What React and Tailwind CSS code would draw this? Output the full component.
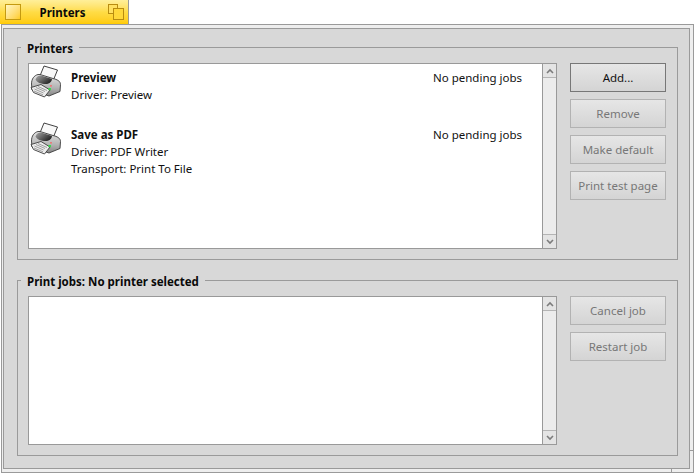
import React from "react";

function PrinterIcon() {
  return (
    <svg width="32" height="33" viewBox="0 0 32 33" className="shrink-0">
      <defs>
        <linearGradient id="body" x1="0" y1="0" x2="0" y2="1">
          <stop offset="0" stopColor="#e4e4e4" />
          <stop offset="0.6" stopColor="#b4b4b4" />
          <stop offset="1" stopColor="#858585" />
        </linearGradient>
        <linearGradient id="well" x1="0" y1="0" x2="1" y2="0.6">
          <stop offset="0" stopColor="#a8a8a8" />
          <stop offset="1" stopColor="#262626" />
        </linearGradient>
      </defs>
      <path d="M9.5 12 L14 1 L27.5 5 L23 16 Z" fill="#f8f8f8" stroke="#2e2e2e" strokeWidth="0.9" />
      <path d="M1.5 19 C1.5 14 4 10.5 8 9.5 L10 9.5 L23 13.5 C27 14.5 30.5 16 30.5 19.5 L30 26.5 L19 31 L2 25 Z" fill="url(#body)" stroke="#3a3a3a" strokeWidth="0.9" />
      <path d="M5.5 14.5 C6.5 11.5 9 10 11 10.5 L22 14 C21.5 17.5 19 19 15.5 19 C11 19 7 17.5 5.5 14.5 Z" fill="url(#well)" />
      <path d="M1 22.5 L11 19.5 L20 25 L14.5 32 L3.5 27.5 Z" fill="#ececec" stroke="#3a3a3a" strokeWidth="0.9" />
      <path d="M6 22.5 L15 26.5 M8 21.5 L17 25.5 M4.5 24 L13.5 28 M4 26 L13 29.8" stroke="#8c8c8c" strokeWidth="0.8" />
      <rect x="20" y="20" width="2" height="1.6" fill="#e97a7a" />
      <rect x="18.5" y="23" width="2.4" height="2.2" fill="#35dc48" />
    </svg>
  );
}

function ScrollBar() {
  return (
    <div className="w-[14px] shrink-0 flex flex-col border-l border-[#999999] bg-[#ececec]">
      <div className="h-[14px] flex items-center justify-center border-b border-[#b4b4b4] bg-[#e4e4e4]">
        <svg width="8" height="6" viewBox="0 0 8 6"><path d="M1 5 L4 2 L7 5" fill="none" stroke="#7c7c7c" strokeWidth="1.6" /></svg>
      </div>
      <div className="flex-1" />
      <div className="h-[14px] flex items-center justify-center border-t border-[#b4b4b4] bg-[#e4e4e4]">
        <svg width="8" height="6" viewBox="0 0 8 6"><path d="M1 1 L4 4 L7 1" fill="none" stroke="#7c7c7c" strokeWidth="1.6" /></svg>
      </div>
    </div>
  );
}

function Btn({ children, active }) {
  return (
    <button
      className={
        "w-[96px] h-[29px] border text-[11.5px] bg-gradient-to-b from-[#e6e6e6] to-[#d4d4d4] " +
        (active
          ? "border-[#777777] text-[#111111]"
          : "border-[#b2b2b2] text-[#777777]")
      }
    >
      {children}
    </button>
  );
}

function Group({ title, className, children }) {
  return (
    <div className={"relative w-[661px] border border-[#9a9a9a] pl-[10px] pr-[10px] pt-[15px] flex gap-[13px] " + className}>
      <span className="absolute left-[3px] top-[-8px] bg-[#d8d8d8] px-[6px] text-[11.5px] leading-[17px] font-bold text-[#0a0a0a]">
        {title}
      </span>
      {children}
    </div>
  );
}

function PrinterRow({ name, lines, className }) {
  return (
    <div className={"flex " + className}>
      <div className="w-[42px] pl-[1px] shrink-0"><PrinterIcon /></div>
      <div className="flex-1 text-[11.5px] leading-[17px] text-[#111111] pt-[4px]">
        <div className="font-bold">{name}</div>
        {lines.map((l) => (
          <div key={l}>{l}</div>
        ))}
      </div>
      <div className="w-[109px] text-[11.5px] leading-[17px] text-[#111111] pt-[4px]">No pending jobs</div>
    </div>
  );
}

export default function App() {
  return (
    <div
      className="w-[694px] h-[473px] bg-white flex flex-col overflow-hidden"
      style={{ fontFamily: '"Noto Sans", sans-serif' }}
    >
      <div className="h-[24px] w-[129px] flex shrink-0 bg-gradient-to-b from-[#ffef99] via-[#ffdc45] to-[#ffcb00] items-center pl-[5px] pr-[4px] border-r border-[#9a9a9a]">
        <div className="w-[16px] h-[16px] border border-[#c49a10] bg-gradient-to-br from-[#fff6c0] to-[#ffcc10] shrink-0" />
        <div className="flex-1 text-center pr-[4px] text-[11.5px] font-bold text-[#0a0a0a] leading-[17px]">Printers</div>
        <svg width="16" height="16" viewBox="0 0 16 16" className="shrink-0">
          <rect x="0.5" y="0.5" width="9" height="9" fill="#ffe060" stroke="#b88c10" />
          <rect x="5.5" y="4.5" width="10" height="11" fill="#ffd83a" stroke="#b88c10" />
        </svg>
      </div>
      <div className="relative w-[693px] h-[449px] ml-[1px] border border-[#9a9a9a] bg-[#eeeeee] pl-[1px] pt-[3px] pr-[3px] pb-[3px] shrink-0">
        <div className="h-full border border-[#9a9a9a] bg-[#d8d8d8] pl-[13px] pt-[18px] flex flex-col">
          <Group title="Printers" className="h-[213px]">
            <div className="w-[529px] h-[186px] border border-[#999999] bg-white flex shrink-0">
              <div className="flex-1 flex flex-col pt-[1px] min-w-0">
                <PrinterRow name="Preview" lines={["Driver: Preview"]} className="h-[57px]" />
                <PrinterRow name="Save as PDF" lines={["Driver: PDF Writer", "Transport: Print To File"]} />
              </div>
              <ScrollBar />
            </div>
            <div className="flex flex-col gap-[7px]">
              <Btn active>Add...</Btn>
              <Btn>Remove</Btn>
              <Btn>Make default</Btn>
              <Btn>Print test page</Btn>
            </div>
          </Group>
          <Group title="Print jobs: No printer selected" className="h-[176px] mt-[20px]">
            <div className="w-[529px] h-[149px] border border-[#999999] bg-white flex shrink-0">
              <div className="flex-1" />
              <ScrollBar />
            </div>
            <div className="flex flex-col gap-[7px]">
              <Btn>Cancel job</Btn>
              <Btn>Restart job</Btn>
            </div>
          </Group>
        </div>
        <span className="absolute left-[669px] bottom-0 w-[1px] h-[3px] bg-[#9a9a9a]" />
        <span className="absolute right-0 top-[425px] w-[3px] h-[1px] bg-[#9a9a9a]" />
      </div>
    </div>
  );
}
